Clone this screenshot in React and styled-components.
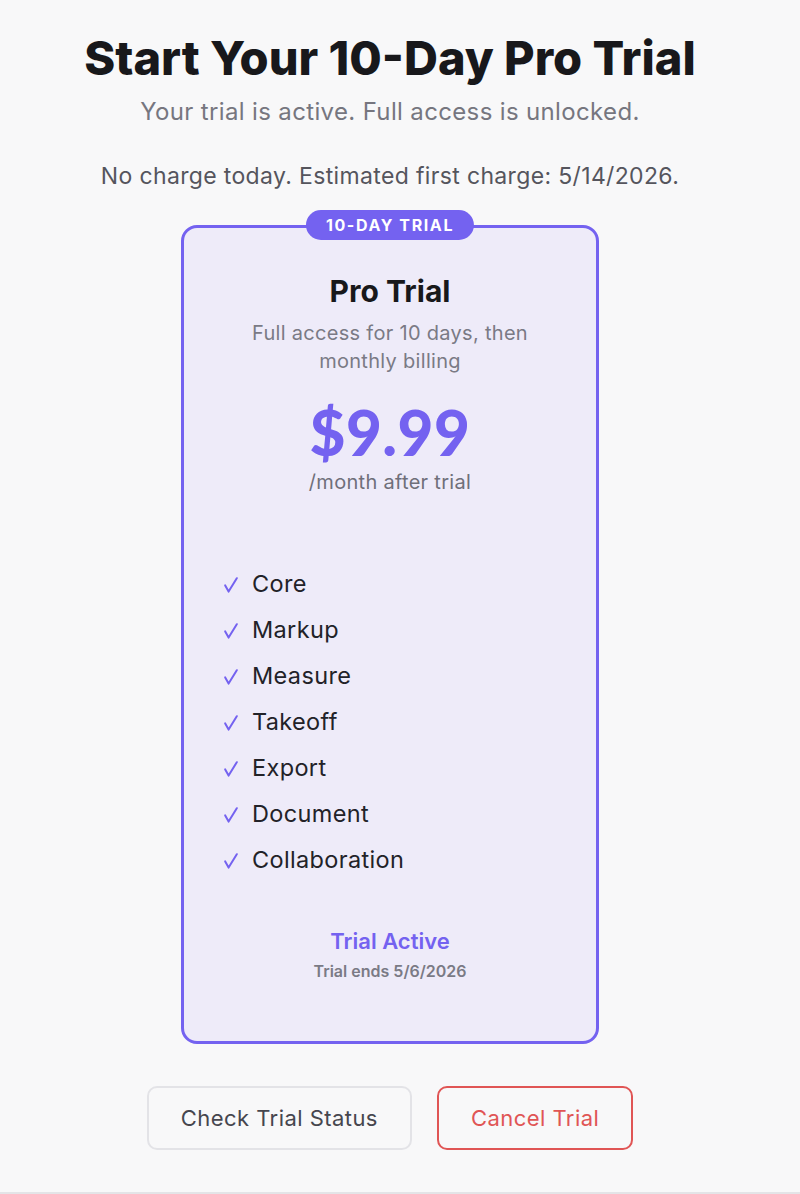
import React from "react";
import styled, { createGlobalStyle } from "styled-components";

const Global = createGlobalStyle`
  html, body { margin: 0; padding: 0; background: #f8f8f9; }
  body { font-family: Inter, "Noto Sans", sans-serif; color: #1a1a1f; }
`;

const Page = styled.div`
  width: 780px;
  min-height: 1194px;
  border-bottom: 2px solid #e4e4e7;
  display: flex;
  flex-direction: column;
  align-items: center;
  padding-top: 28px;
  box-sizing: border-box;
  position: relative;
  &::after {
    content: "";
    position: absolute;
    left: 780px;
    bottom: -2px;
    width: 20px;
    height: 2px;
    background: #e4e4e7;
  }
`;

const Title = styled.h1`
  margin: 0;
  font-size: 47px;
  line-height: 60px;
  font-weight: 800;
  letter-spacing: 0;
  color: #18181b;
`;

const Sub = styled.p`
  margin: ${(p) => p.$mt || 0}px 0 0;
  font-size: ${(p) => p.$size}px;
  line-height: 30px;
  letter-spacing: 0.35px;
  color: ${(p) => p.$color};
`;

const CardWrap = styled.div`
  position: relative;
  margin-top: 34px;
`;

const Card = styled.div`
  width: 418px;
  box-sizing: border-box;
  height: 819px;
  border: 3px solid #7462f0;
  border-radius: 16px;
  background: #eeebf9;
  display: flex;
  flex-direction: column;
  align-items: center;
  padding: 43px 40px 0;
`;

const Badge = styled.div`
  position: absolute;
  top: -15px;
  left: 50%;
  transform: translateX(-50%);
  background: #7462f0;
  color: #fff;
  font-weight: 700;
  font-size: 16px;
  letter-spacing: 1.6px;
  height: 30px;
  line-height: 30px;
  padding: 0 20px;
  border-radius: 15px;
  white-space: nowrap;
`;

const PlanName = styled.h2`
  margin: 0;
  font-size: 30px;
  line-height: 40px;
  font-weight: 700;
  color: #18181b;
`;

const PlanDesc = styled.p`
  margin: 8px 0 0;
  text-align: center;
  font-size: 20px;
  line-height: 28px;
  letter-spacing: 0.3px;
  color: #7a7a85;
  max-width: 300px;
`;

const Price = styled.div`
  margin-top: 22px;
  font-family: Lato, Inter, sans-serif;
  font-size: 62px;
  line-height: 70px;
  font-weight: 900;
  color: #7462f0;
  letter-spacing: 0.5px;
`;

const Per = styled.div`
  margin-top: 2px;
  font-size: 20px;
  line-height: 26px;
  letter-spacing: 0.3px;
  color: #6f6f7a;
`;

const Features = styled.ul`
  list-style: none;
  margin: 75px 0 0;
  padding: 0;
  align-self: stretch;
  display: flex;
  flex-direction: column;
  gap: 18px;
`;

const Feature = styled.li`
  display: flex;
  align-items: center;
  gap: 14px;
  height: 28px;
  font-size: 23.5px;
  line-height: 28px;
  letter-spacing: 0.35px;
  color: #222228;
`;

const CheckIcon = styled.svg`
  width: 14px;
  height: 16px;
  flex: none;
  margin-top: 2px;
`;

const Check = () => (
  <CheckIcon viewBox="0 0 14 16">
    <path
      d="M1.2 8.4 L4.6 14.6 L12.8 1.2"
      fill="none"
      stroke="#7462f0"
      strokeWidth="2"
      strokeLinecap="round"
      strokeLinejoin="round"
    />
  </CheckIcon>
);

const Status = styled.div`
  margin-top: 53px;
  font-size: 22px;
  line-height: 28px;
  font-weight: 600;
  color: #7462f0;
`;

const Ends = styled.div`
  margin-top: 5px;
  font-size: 16px;
  line-height: 22px;
  font-weight: 600;
  color: #7a7a85;
`;

const Actions = styled.div`
  margin-top: 42px;
  display: flex;
  gap: 25px;
`;

const Button = styled.button`
  height: 64px;
  padding: 0 32px;
  box-sizing: border-box;
  border-radius: 10px;
  background: #f8f8f9;
  font-family: inherit;
  font-size: 22px;
  letter-spacing: 0.45px;
  border: 2px solid ${(p) => (p.$danger ? "#e05555" : "#e3e3e7")};
  color: ${(p) => (p.$danger ? "#e05555" : "#46464e")};
  cursor: pointer;
`;

const features = ["Core", "Markup", "Measure", "Takeoff", "Export", "Document", "Collaboration"];

export default function App() {
  return (
    <>
      <Global />
      <Page>
        <Title>Start Your 10-Day Pro Trial</Title>
        <Sub $size={24} $color="#76767f" $mt={9}>Your trial is active. Full access is unlocked.</Sub>
        <Sub $size={23} $color="#55555d" $mt={34}>
          No charge today. Estimated first charge: 5/14/2026.
        </Sub>
        <CardWrap>
          <Badge>10-DAY TRIAL</Badge>
          <Card>
            <PlanName>Pro Trial</PlanName>
            <PlanDesc>Full access for 10 days, then monthly billing</PlanDesc>
            <Price>$9.99</Price>
            <Per>/month after trial</Per>
            <Features>
              {features.map((f) => (
                <Feature key={f}>
                  <Check />
                  {f}
                </Feature>
              ))}
            </Features>
            <Status>Trial Active</Status>
            <Ends>Trial ends 5/6/2026</Ends>
          </Card>
        </CardWrap>
        <Actions>
          <Button>Check Trial Status</Button>
          <Button $danger>Cancel Trial</Button>
        </Actions>
      </Page>
    </>
  );
}
